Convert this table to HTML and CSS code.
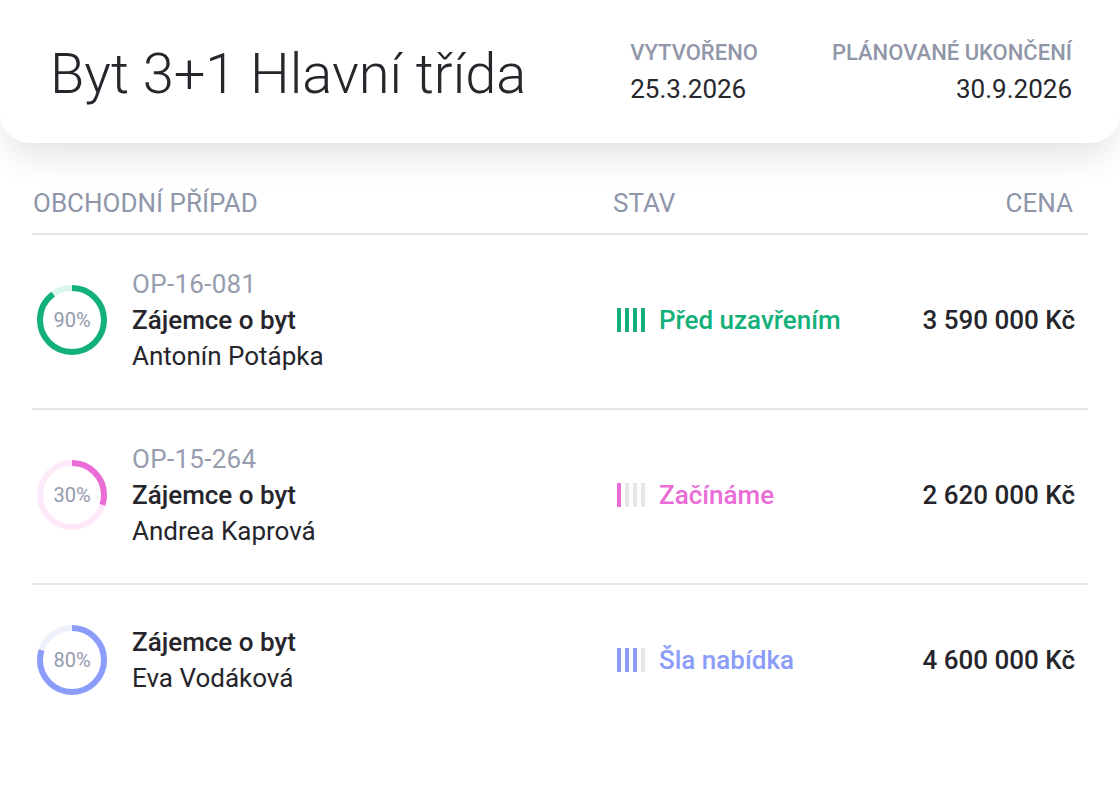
FILE: index.html
```html
<!DOCTYPE html>
<html lang="cs">
<head>
<meta charset="utf-8">
<title>Byt 3+1 Hlavní třída</title>
<link rel="stylesheet" href="styles.css">
</head>
<body>
<header class="hero">
  <h1 class="hero-title">Byt 3+1 Hlavní třída</h1>
  <div class="hero-meta">
    <div class="meta-item">
      <div class="meta-label">Vytvořeno</div>
      <div class="meta-value">25.3.2026</div>
    </div>
    <div class="meta-item meta-item--right">
      <div class="meta-label">Plánované ukončení</div>
      <div class="meta-value">30.9.2026</div>
    </div>
  </div>
</header>

<section class="deals">
  <div class="deals-head">
    <div class="col-case">Obchodní případ</div>
    <div class="col-state">Stav</div>
    <div class="col-price">Cena</div>
  </div>

  <div class="deal">
    <div class="col-case case">
      <div class="ring">
        <svg viewBox="0 0 70 70" width="70" height="70">
          <circle class="ring-track ring-track--green" cx="35" cy="35" r="32"/>
          <circle class="ring-bar ring-bar--green" cx="35" cy="35" r="32" pathLength="100" stroke-dasharray="90 100" transform="rotate(-90 35 35)"/>
        </svg>
        <span class="ring-label">90%</span>
      </div>
      <div class="case-text">
        <div class="case-code">OP-16-081</div>
        <div class="case-type">Zájemce o byt</div>
        <div class="case-name">Antonín Potápka</div>
      </div>
    </div>
    <div class="col-state state state--green">
      <span class="bars"><i class="on"></i><i class="on"></i><i class="on"></i><i class="on"></i></span>
      <span class="state-text">Před uzavřením</span>
    </div>
    <div class="col-price price">3 590 000 Kč</div>
  </div>

  <div class="deal">
    <div class="col-case case">
      <div class="ring">
        <svg viewBox="0 0 70 70" width="70" height="70">
          <circle class="ring-track ring-track--pink" cx="35" cy="35" r="32"/>
          <circle class="ring-bar ring-bar--pink" cx="35" cy="35" r="32" pathLength="100" stroke-dasharray="30 100" transform="rotate(-90 35 35)"/>
        </svg>
        <span class="ring-label">30%</span>
      </div>
      <div class="case-text">
        <div class="case-code">OP-15-264</div>
        <div class="case-type">Zájemce o byt</div>
        <div class="case-name">Andrea Kaprová</div>
      </div>
    </div>
    <div class="col-state state state--pink">
      <span class="bars"><i class="on"></i><i></i><i></i><i></i></span>
      <span class="state-text">Začínáme</span>
    </div>
    <div class="col-price price">2 620 000 Kč</div>
  </div>

  <div class="deal deal--compact">
    <div class="col-case case">
      <div class="ring">
        <svg viewBox="0 0 70 70" width="70" height="70">
          <circle class="ring-track ring-track--blue" cx="35" cy="35" r="32"/>
          <circle class="ring-bar ring-bar--blue" cx="35" cy="35" r="32" pathLength="100" stroke-dasharray="80 100" transform="rotate(-90 35 35)"/>
        </svg>
        <span class="ring-label">80%</span>
      </div>
      <div class="case-text">
        <div class="case-type">Zájemce o byt</div>
        <div class="case-name">Eva Vodáková</div>
      </div>
    </div>
    <div class="col-state state state--blue">
      <span class="bars"><i class="on"></i><i class="on"></i><i class="on"></i><i></i></span>
      <span class="state-text">Šla nabídka</span>
    </div>
    <div class="col-price price">4 600 000 Kč</div>
  </div>
</section>
</body>
</html>
```

FILE: styles.css
```css
* { box-sizing: border-box; }

html, body {
  margin: 0;
  padding: 0;
  background: #ffffff;
  font-family: Roboto, "Liberation Sans", Arial, sans-serif;
  color: #25252b;
}

.hero {
  height: 143px;
  background: #ffffff;
  border-radius: 0 0 30px 30px;
  box-shadow: 0 22px 34px -8px rgba(0, 0, 0, 0.11);
  display: flex;
  align-items: center;
  justify-content: space-between;
  padding: 4px 48px 0 50px;
  position: relative;
  z-index: 1;
}

.hero-title {
  margin: 0;
  font-weight: 300;
  font-size: 56px;
  line-height: 1;
  color: #26262c;
}

.hero-meta {
  display: flex;
  gap: 74px;
}

.meta-item--right { text-align: right; }

.meta-label {
  font-size: 22px;
  font-weight: 500;
  text-transform: uppercase;
  color: #9197a8;
  line-height: 26px;
}

.meta-value {
  font-size: 26px;
  font-weight: 400;
  color: #26262c;
  line-height: 36px;
  margin-top: 5px;
}

.deals {
  margin: 44px 32px 0 32px;
}

.deals-head {
  display: grid;
  grid-template-columns: 580px 1fr auto;
  align-items: start;
  height: 48px;
  padding: 0 15px 0 1px;
  line-height: 32px;
  border-bottom: 2px solid #e6e6e8;
  font-size: 26px;
  font-weight: 400;
  text-transform: uppercase;
  color: #8f96aa;
}

.deal {
  display: grid;
  grid-template-columns: 580px 1fr auto;
  align-items: center;
  padding: 31px 13px 34px 5px;
  border-bottom: 2px solid #e6e6e8;
}

.deal--compact {
  padding-top: 39px;
  border-bottom: none;
}

.case {
  display: flex;
  align-items: center;
  gap: 25px;
}

.ring {
  position: relative;
  width: 70px;
  height: 70px;
  flex: none;
}

.ring svg { display: block; }

.ring circle {
  fill: none;
  stroke-width: 6;
}

.ring-track--green { stroke: #d8f6ea; }
.ring-bar--green { stroke: #13b07a; }
.ring-track--pink { stroke: #fde9f7; }
.ring-bar--pink { stroke: #ea6cd6; }
.ring-track--blue { stroke: #eef0fb; }
.ring-bar--blue { stroke: #8b9cfb; }

.ring-label {
  position: absolute;
  inset: 0;
  display: flex;
  align-items: center;
  justify-content: center;
  font-size: 20px;
  color: #949aad;
}

.case-text {
  font-size: 26px;
  line-height: 36px;
}

.case-code { color: #979dae; letter-spacing: 0.3px; }
.case-type { font-weight: 500; color: #25252b; }
.case-name { color: #25252b; }

.state {
  display: flex;
  align-items: center;
  gap: 14px;
}

.bars {
  display: flex;
  gap: 4px;
}

.bars i {
  display: block;
  width: 4px;
  height: 24px;
  background: #e6e6e8;
}

.state--green .bars i.on { background: #13b07a; }
.state--pink .bars i.on { background: #ea6cd6; }
.state--blue .bars i.on { background: #8b9cfb; }

.state-text {
  font-size: 26px;
  font-weight: 500;
}

.state--green .state-text { color: #13b07a; }
.state--pink .state-text { color: #ea6cd6; }
.state--blue .state-text { color: #8b9cfb; }

.price {
  font-size: 26px;
  font-weight: 500;
  text-align: right;
  color: #25252b;
}
```
